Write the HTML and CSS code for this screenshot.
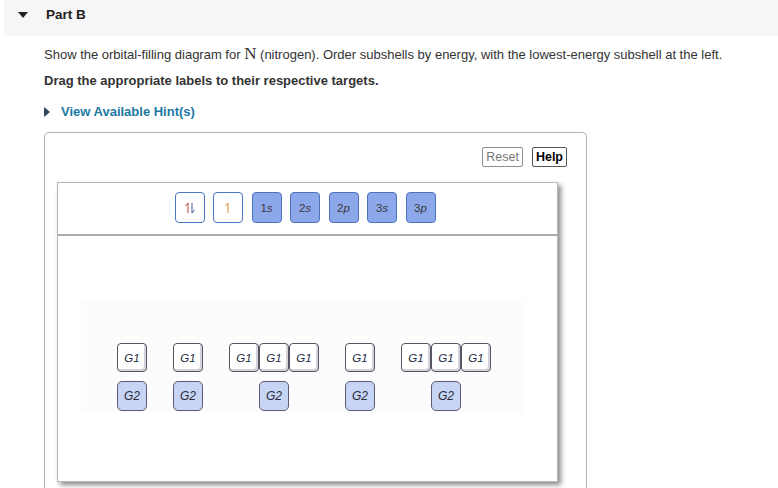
FILE: index.html
```html
<!DOCTYPE html>
<html>
<head>
<meta charset="utf-8">
<link rel="stylesheet" href="styles.css">
</head>
<body>
<div class="header">
  <span class="caret-down"></span>
  <span class="part-title">Part B</span>
</div>
<div class="content">
  <p class="prompt">Show the orbital-filling diagram for <span class="elem">N</span> (nitrogen). Order subshells by energy, with the lowest-energy subshell at the left.</p>
  <p class="instr">Drag the appropriate labels to their respective targets.</p>
  <p class="hint"><span class="caret-right"></span>View Available Hint(s)</p>
  <div class="widget">
    <div class="toolbar">
      <span class="btn btn-reset">Reset</span>
      <span class="btn btn-help">Help</span>
    </div>
    <div class="panel">
      <div class="toolbox">
        <span class="tile tile-arrow">
          <svg width="14" height="14" viewBox="0 0 14 14">
            <path d="M5 2 V12 M5 2 L2.5 5" stroke="#b8483f" stroke-width="1" fill="none"/>
            <path d="M9 2 V12 M9 12 L11.5 9" stroke="#3e5a96" stroke-width="1" fill="none"/>
          </svg>
        </span>
        <span class="tile tile-arrow">
          <svg width="14" height="14" viewBox="0 0 14 14">
            <path d="M7 2 V12 M7 2 L4.5 5" stroke="#d98a3a" stroke-width="1" fill="none"/>
          </svg>
        </span>
        <span class="tile tile-sub">1<i>s</i></span>
        <span class="tile tile-sub">2<i>s</i></span>
        <span class="tile tile-sub">2<i>p</i></span>
        <span class="tile tile-sub">3<i>s</i></span>
        <span class="tile tile-sub">3<i>p</i></span>
      </div>
      <div class="droparea">
        <div class="targets">
          <div class="col">
            <div class="g1row"><span class="g1">G1</span></div>
            <span class="g2">G2</span>
          </div>
          <div class="col">
            <div class="g1row"><span class="g1">G1</span></div>
            <span class="g2">G2</span>
          </div>
          <div class="col">
            <div class="g1row"><span class="g1">G1</span><span class="g1">G1</span><span class="g1">G1</span></div>
            <span class="g2">G2</span>
          </div>
          <div class="col">
            <div class="g1row"><span class="g1">G1</span></div>
            <span class="g2">G2</span>
          </div>
          <div class="col">
            <div class="g1row"><span class="g1">G1</span><span class="g1">G1</span><span class="g1">G1</span></div>
            <span class="g2">G2</span>
          </div>
        </div>
      </div>
    </div>
  </div>
</div>
</body>
</html>
```

FILE: styles.css
```css
* { box-sizing: border-box; }
html, body { margin: 0; padding: 0; background: #fff; }
body {
  font-family: "Liberation Sans", Arial, sans-serif;
  color: #333;
  font-size: 13px;
  overflow: hidden;
  height: 488px;
}
.header {
  margin-left: 4px;
  height: 36px;
  background: #f6f6f6;
  display: flex;
  align-items: center;
  padding-left: 14px;
}
.caret-down {
  width: 0; height: 0;
  border-left: 5px solid transparent;
  border-right: 5px solid transparent;
  border-top: 6px solid #222;
  margin-top: -6px;
}
.part-title {
  font-weight: bold;
  font-size: 13.5px;
  color: #222;
  margin-left: 18px;
  margin-top: -7px;
}
.content { padding-left: 44px; }
.prompt {
  margin: 9px 0 0 0;
  line-height: 18px;
}
.elem {
  font-family: "Liberation Serif", "Times New Roman", serif;
  font-size: 17px;
}
.instr {
  margin: 9px 0 0 0;
  font-weight: bold;
  line-height: 16px;
}
.hint {
  margin: 15px 0 0 0;
  line-height: 16px;
  font-weight: bold;
  color: #1c79a3;
  display: flex;
  align-items: center;
}
.caret-right {
  width: 0; height: 0;
  border-top: 5px solid transparent;
  border-bottom: 5px solid transparent;
  border-left: 6px solid #2c4660;
  margin-right: 11px;
}
.widget {
  margin-top: 12px;
  width: 543px;
  height: 400px;
  border: 1px solid #b4b4b4;
  border-bottom: none;
  border-radius: 5px 5px 0 0;
}
.toolbar {
  display: flex;
  justify-content: flex-end;
  gap: 9px;
  padding: 14px 19px 0 0;
  height: 49px;
}
.btn {
  height: 20px;
  line-height: 18px;
  padding: 0 3px;
  font-size: 12.5px;
  border-radius: 2px;
  background: #fff;
}
.btn-reset { border: 1px solid #8a9097; color: #777; }
.btn-help { border: 1px solid #555; color: #000; font-weight: bold; }
.panel {
  margin-left: 12px;
  width: 501px;
  height: 300px;
  border: 1px solid #b8b8b8;
  box-shadow: 3px 3px 5px rgba(0,0,0,0.45);
  background: #fff;
}
.toolbox {
  height: 53px;
  border-bottom: 2px solid #aaa;
  display: flex;
  justify-content: center;
  gap: 8.5px;
  padding: 9px 5px 0 0;
}
.tile {
  width: 30px;
  height: 31px;
  border-radius: 4px;
  display: flex;
  align-items: center;
  justify-content: center;
  font-size: 11.5px;
  color: #3a3a3a;
}
.tile-arrow { background: #fff; border: 1px solid #4a76c4; }
.tile-sub { background: #8ca8eb; border: 1px solid #4d73bd; }
.tile i { font-style: italic; }
.droparea {
  padding: 64px 0 0 23px;
}
.targets {
  width: 443px;
  height: 113px;
  background: #fcfcfd;
  display: flex;
  gap: 26px;
  padding: 43px 0 0 36px;
}
.col {
  display: flex;
  flex-direction: column;
  align-items: center;
  gap: 9px;
}
.g1row { display: flex; }
.g1 {
  width: 30px;
  height: 29px;
  border: 1px solid #555566;
  border-radius: 4px;
  background: #fff;
  box-shadow: inset -2px -2px 0 #d4d4d8, inset 1px 1px 0 #fff;
  display: flex;
  align-items: center;
  justify-content: center;
  font-style: italic;
  font-size: 11.5px;
  color: #1e2a44;
}
.g2 {
  width: 30px;
  height: 30px;
  border: 1px solid #5b5b70;
  border-radius: 5px;
  background: #c6d5f4;
  display: flex;
  align-items: center;
  justify-content: center;
  font-style: italic;
  font-size: 12px;
  color: #2a2a3a;
}
```
